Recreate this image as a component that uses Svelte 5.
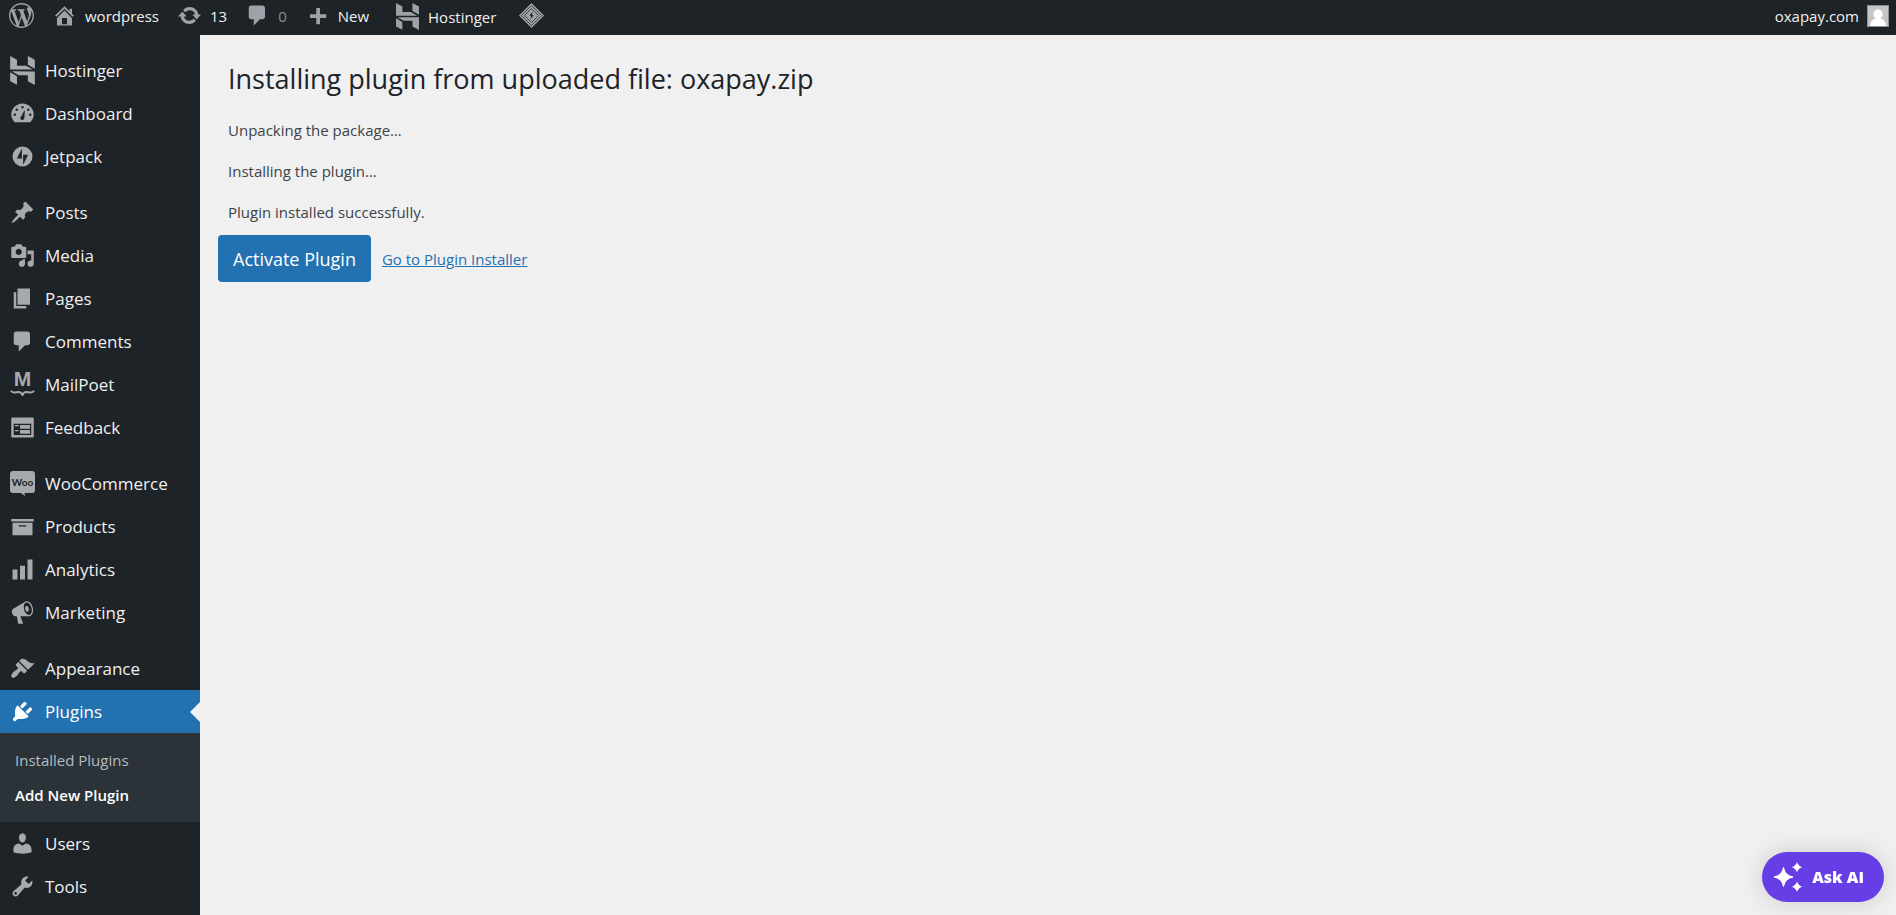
<script>
  const hostinger =
    'M16.415 0v7.16l5.785 3.384V3.006L16.415 0ZM1.8 0v11.237h18.815L14.89 8.09l-7.457-.003V3.024L1.8 0Zm14.615 20.894v-5.019l-7.514-.005c.007.033-5.82-3.197-5.82-3.197l19.119.091V24l-5.785-3.106ZM1.8 13.551v7.343l5.633 2.949v-6.988L1.8 13.551Z';

  const icons = {
    wordpress:
      'M20 10c0-5.51-4.49-10-10-10C4.48 0 0 4.49 0 10c0 5.52 4.48 10 10 10 5.51 0 10-4.48 10-10zM7.78 15.37L4.37 6.22c.55-.02 1.17-.08 1.17-.08.5-.06.44-1.13-.06-1.11 0 0-1.45.11-2.37.11-.18 0-.37 0-.58-.01C4.12 2.69 6.87 1.11 10 1.11c2.33 0 4.45.87 6.05 2.34-.68-.11-1.65.39-1.65 1.58 0 .74.45 1.36.9 2.1.35.61.55 1.36.55 2.46 0 1.49-1.4 5-1.4 5l-3.03-8.37c.54-.02.82-.17.82-.17.5-.05.44-1.25-.06-1.22 0 0-1.44.12-2.38.12-.87 0-2.33-.12-2.33-.12-.5-.03-.56 1.2-.06 1.22l.92.08 1.26 3.41zM17.41 10c.24-.64.74-1.87.43-4.25.7 1.29 1.05 2.71 1.05 4.25 0 3.29-1.73 6.24-4.4 7.78.97-2.59 1.94-5.2 2.92-7.78zM6.1 18.09C3.12 16.65 1.11 13.53 1.11 10c0-1.3.23-2.48.72-3.59C3.25 10.3 4.67 14.2 6.1 18.09zm4.03-6.63l2.58 6.98c-.86.29-1.76.45-2.71.45-.79 0-1.57-.11-2.29-.33.81-2.38 1.62-4.74 2.42-7.1z',
    home: 'M16 8.5l1.53 1.53-1.06 1.06L10 4.6l-6.47 6.49-1.06-1.06L10 2.5l4 4v-2h2v4zm-6-2.46l6 5.99V18H4v-5.97zM12 17v-5H8v5h4z',
    update:
      'M10.2 3.28c3.53 0 6.43 2.61 6.92 6h2.08l-3.5 4-3.5-4h2.32c-.45-1.97-2.21-3.45-4.32-3.45-1.45 0-2.73.71-3.54 1.78L4.95 5.66C6.23 4.2 8.11 3.28 10.2 3.28zm-.4 13.44c-3.52 0-6.43-2.61-6.92-6H.8l3.5-4c1.17 1.33 2.33 2.67 3.5 4H5.48c.45 1.97 2.21 3.45 4.32 3.45 1.45 0 2.73-.71 3.54-1.78l1.71 1.95c-1.28 1.46-3.15 2.38-5.25 2.38z',
    comments: 'M5 2h9c1.1 0 2 .9 2 2v7c0 1.1-.9 2-2 2h-2l-5 5v-5H5c-1.1 0-2-.9-2-2V4c0-1.1.9-2 2-2z',
    plus: 'M17 9v3h-5v5H9v-5H4V9h5V4h3v5z',
    dashboard:
      'M3.76 17h12.48c1.28-1.51 2.76-3.43 2.76-6 0-5-4-9-9-9S1 6 1 11c0 2.57 1.48 4.49 2.76 6zM9 5a1 1 0 1 1 2 0a1 1 0 1 1-2 0zM4.4 7a1 1 0 1 1 2 0a1 1 0 1 1-2 0zM13.6 7a1 1 0 1 1 2 0a1 1 0 1 1-2 0zM2.8 11a1 1 0 1 1 2 0a1 1 0 1 1-2 0zM15.2 11a1 1 0 1 1 2 0a1 1 0 1 1-2 0zM11.4 7.600l.5.2-.4 5.200c.2 1.300-.6 2.200-1.600 2.200-1.200 0-2-1.200-1.600-2.300.2-.5.5-.8.9-1z',
    jetpack: 'M10 2a8 8 0 1 0 0 16 8 8 0 0 0 0-16zM9.500 11.500h-4l4-8zM10.500 16.500v-8h4z',
    posts:
      'M10.44 3.02l1.82-1.82 6.36 6.35-1.83 1.82c-1.05-.68-2.48-.57-3.41.36l-.75.75c-.92.93-1.04 2.35-.35 3.41l-1.83 1.82-2.41-2.41-2.8 2.79c-.42.42-3.38 2.71-3.8 2.29s1.86-3.39 2.28-3.81l2.79-2.79L4.1 9.36l1.83-1.82c1.05.69 2.48.57 3.4-.36l.75-.75c.93-.92 1.05-2.35.36-3.41z',
    media:
      'M13 11V4c0-.55-.45-1-1-1h-1.67L9 1H5L3.67 3H2c-.55 0-1 .45-1 1v7c0 .55.45 1 1 1h10c.55 0 1-.45 1-1zM7 4.5c1.38 0 2.5 1.12 2.5 2.5S8.38 9.5 7 9.5 4.5 8.38 4.5 7 5.62 4.5 7 4.5zM14 6h5v10.5c0 1.38-1.12 2.5-2.5 2.5S14 17.88 14 16.5s1.12-2.5 2.5-2.5c.17 0 .34.02.5.05V9h-3V6zm-4 8.05V13h2v3.5c0 1.38-1.12 2.5-2.5 2.5S7 17.88 7 16.5 8.12 14 9.5 14c.17 0 .34.02.5.05z',
    pages: 'M6 15V2h10v13H6zm-1 1h8v2H3V5h2v11z',
    feedback:
      'M2 2h16c.55 0 1 .45 1 1v14c0 .55-.45 1-1 1H2c-.55 0-1-.45-1-1V3c0-.55.45-1 1-1zm15 14V7H3v9h14zM4 8v1h3V8H4zm4 0v3h8V8H8zm-4 4v1h3v-1H4zm4 0v3h8v-3H8z',
    products: 'M19 4v2H1V4h18zM2 7h16v10H2V7zm11 3V9H7v1h6z',
    analytics: 'M18 18V2h-4v16h4zm-6 0V7H8v11h4zm-6 0v-8H2v8h4z',
    marketing:
      'M18.15 5.94c.46 1.62.38 3.22-.02 4.48-.42 1.28-1.26 2.18-2.3 2.48-.16.06-.26.06-.4.06-.06.02-.12.02-.18.02-.06.02-.14.02-.22.02h-6.8l2.22 5.5c.02.14-.06.26-.14.34-.08.1-.24.16-.34.16H6.95c-.1 0-.26-.06-.34-.16-.08-.08-.16-.2-.14-.34l-1-5.5H4.25l-.02-.02c-.5.06-1.08-.18-1.54-.62s-.88-1.08-1.06-1.88c-.24-.8-.2-1.56-.02-2.2.18-.62.58-1.08 1.06-1.3l.02-.02 9-5.4c.1-.06.18-.1.24-.16.06-.04.14-.08.24-.12.16-.08.28-.12.5-.18 1.04-.3 2.24.1 3.22.98s1.84 2.24 2.26 3.86zm-2.58 5.98h-.02c.4-.1.74-.34 1.04-.7.58-.7.86-1.76.86-3.04 0-.64-.1-1.3-.28-1.98-.34-1.36-1.02-2.5-1.78-3.24s-1.68-1.1-2.46-.88c-.82.22-1.4.96-1.7 2-.32 1.04-.28 2.36.06 3.72.38 1.36 1 2.5 1.8 3.24.78.74 1.62 1.1 2.48.88zm-2.54-7.08c.22-.04.42-.02.62.04.38.16.76.48 1.02 1s.42 1.2.42 1.78c0 .3-.04.56-.12.8-.18.48-.44.84-.86.94-.34.1-.8-.06-1.14-.4s-.64-.86-.78-1.5c-.18-.62-.12-1.24.02-1.72s.48-.84.82-.94z',
    appearance:
      'M14.48 11.06L7.41 3.99l1.5-1.5c.5-.56 2.3-.47 3.51.32 1.21.8 1.43 1.28 2.91 2.1 1.18.64 2.45 1.26 4.45.85zm-.71.71L6.7 4.7 4.93 6.47c-.39.39-.39 1.02 0 1.41l1.06 1.06c.39.39.39 1.03 0 1.42-.6.6-1.43 1.11-2.21 1.69-.35.26-.7.53-1.01.84C1.43 14.23.4 16.08 1.4 17.07c.99 1 2.84-.03 4.18-1.36.31-.31.58-.66.85-1.02.57-.78 1.08-1.61 1.69-2.21.39-.39 1.02-.39 1.41 0l1.06 1.06c.39.39 1.02.39 1.41 0z',
    plugins:
      'M13.11 4.36L9.87 7.6 8 5.73l3.24-3.24c.35-.34 1.05-.2 1.56.32.52.51.66 1.21.31 1.55zm-8 1.77l.91-1.12 9.01 9.01-1.19.84c-.71.71-2.63 1.16-3.82 1.16H6.14L4.9 17.26c-.59.59-1.54.59-2.12 0-.59-.58-.59-1.53 0-2.12l1.24-1.24v-3.88c0-1.13.4-3.19 1.09-3.89zm7.26 3.97l3.24-3.24c.34-.35 1.04-.21 1.55.31.52.51.66 1.21.31 1.55l-3.24 3.25z',
    users:
      'M10 9.25c-2.27 0-2.73-3.44-2.73-3.44C7 4.02 7.82 2 9.97 2c2.16 0 2.98 2.02 2.71 3.81 0 0-.41 3.44-2.68 3.44zm0 2.57L12.72 10c2.39 0 4.52 2.33 4.52 4.53v2.49s-3.65 1.13-7.24 1.13c-3.65 0-7.24-1.13-7.24-1.13v-2.49c0-2.25 1.94-4.48 4.47-4.48z',
    tools:
      'M16.68 9.77c-1.34 1.34-3.3 1.67-4.95.99l-5.41 6.52c-.99.99-2.59.99-3.58 0s-.99-2.59 0-3.57l6.52-5.42c-.68-1.65-.35-3.61.99-4.95 1.28-1.28 3.12-1.62 4.72-1.06l-2.89 2.89 2.82 2.82 2.86-2.87c.53 1.58.18 3.39-1.08 4.65zM3.81 16.21c.4.39 1.04.39 1.43 0 .4-.4.4-1.04 0-1.43-.39-.4-1.03-.4-1.43 0-.39.39-.39 1.03 0 1.43z'
  };

  const groups = [
    [
      { label: 'Hostinger', icon: 'hostinger' },
      { label: 'Dashboard', icon: 'dashboard' },
      { label: 'Jetpack', icon: 'jetpack' }
    ],
    [
      { label: 'Posts', icon: 'posts' },
      { label: 'Media', icon: 'media' },
      { label: 'Pages', icon: 'pages' },
      { label: 'Comments', icon: 'comments' },
      { label: 'MailPoet', icon: 'mailpoet' },
      { label: 'Feedback', icon: 'feedback' }
    ],
    [
      { label: 'WooCommerce', icon: 'woo' },
      { label: 'Products', icon: 'products' },
      { label: 'Analytics', icon: 'analytics' },
      { label: 'Marketing', icon: 'marketing' }
    ],
    [
      { label: 'Appearance', icon: 'appearance' },
      {
        label: 'Plugins',
        icon: 'plugins',
        current: true,
        children: [{ label: 'Installed Plugins' }, { label: 'Add New Plugin', current: true }]
      },
      { label: 'Users', icon: 'users' },
      { label: 'Tools', icon: 'tools' }
    ]
  ];

  const messages = ['Unpacking the package…', 'Installing the plugin…', 'Plugin installed successfully.'];
</script>

{#snippet icon(name)}
  {#if name === 'hostinger'}
    <svg class="icon tall" viewBox="1.8 0 20.4 24" aria-hidden="true"><path d={hostinger} /></svg>
  {:else if name === 'mailpoet'}
    <svg class="icon mail" viewBox="0 0 25 35" aria-hidden="true">
      <text x="12.500" y="19" text-anchor="middle" font-size="21" font-weight="700">M</text>
      <path class="line" d="M1.500 24.300c2 2.200 4.800.8 7 .8 2 0 3 .9 4 2.900 1-2 2-2.900 4-2.900 2.200 0 5 1.400 7-.8" />
    </svg>
  {:else if name === 'woo'}
    <svg class="icon" viewBox="0 0 25 25" aria-hidden="true">
      <path d="M3 0h19a3 3 0 0 1 3 3v16a3 3 0 0 1-3 3h-7.500l.5 3-4-3H3a3 3 0 0 1-3-3V3a3 3 0 0 1 3-3z" />
      <text class="cut woo" x="12.500" y="14.500" text-anchor="middle" font-size="10" font-weight="700">Woo</text>
    </svg>
  {:else}
    <svg class="icon" viewBox="0 0 20 20" aria-hidden="true"><path fill-rule="evenodd" d={icons[name]} /></svg>
  {/if}
{/snippet}

<div class="page">
  <header class="bar">
    <nav class="bar-items" aria-label="Toolbar">
      <a class="bar-item" href="#about" aria-label="About WordPress">{@render icon('wordpress')}</a>
      <a class="bar-item" href="#site">{@render icon('home')}<span>wordpress</span></a>
      <a class="bar-item" href="#updates">{@render icon('update')}<span>13</span></a>
      <a class="bar-item" href="#comments">{@render icon('comments')}<span class="dim">0</span></a>
      <a class="bar-item" href="#new">{@render icon('plus')}<span>New</span></a>
      <a class="bar-item host" href="#hostinger">{@render icon('hostinger')}<span>Hostinger</span></a>
      <a class="bar-item cache" href="#cache" aria-label="LiteSpeed Cache">
        <svg class="icon" viewBox="0 0 25 25" aria-hidden="true">
          <path d="M12.500 0L25 12.500 12.500 25 0 12.500z" />
          <path class="ring" d="M12.500 2.500l10 10-10 10-10-10z" />
          <path class="ring" d="M12.500 5.500l7 7-7 7-7-7z" />
          <path class="cut" d="M14 8.500l-3.500 3.700 1.700.9-1.200 3.400 3.600-4-1.700-.9z" />
        </svg>
      </a>
    </nav>
    <a class="bar-item account" href="#profile">
      <span>oxapay.com</span>
      <svg class="avatar" viewBox="0 0 22 22" aria-hidden="true">
        <rect width="22" height="22" fill="#8c8f94" />
        <rect x="1" y="1" width="20" height="20" fill="#c5c5c5" />
        <path
          fill="#fff"
          d="M11 4.500c2.700 0 4.600 1.900 4.600 4.500 0 1.900-.9 3.500-2.300 4.300 3.300.7 5.200 3.300 5.700 7.700H3c.5-4.400 2.400-7 5.700-7.700C7.300 12.500 6.400 10.900 6.400 9c0-2.600 1.900-4.500 4.600-4.500z"
        />
      </svg>
    </a>
  </header>

  <div class="body">
    <nav class="menu" aria-label="Main menu">
      {#each groups as group}
        <ul class="group">
          {#each group as item}
            <li>
              <a class="item" class:current={item.current} href="#{item.icon}">
                {@render icon(item.icon)}<span>{item.label}</span>
              </a>
              {#if item.children}
                <ul class="sub">
                  {#each item.children as child}
                    <li><a class="sub-item" class:active={child.current} href="#plugins">{child.label}</a></li>
                  {/each}
                </ul>
              {/if}
            </li>
          {/each}
        </ul>
      {/each}
    </nav>

    <main class="content">
      <h1>Installing plugin from uploaded file: oxapay.zip</h1>
      {#each messages as message}
        <p>{message}</p>
      {/each}
      <div class="actions">
        <button type="button" class="primary">Activate Plugin</button>
        <a class="link" href="#installer">Go to Plugin Installer</a>
      </div>
    </main>
  </div>

  <button type="button" class="ask">
    <svg width="30" height="30" viewBox="0 0 30 30" aria-hidden="true">
      <path d="M10.500 5.500q1.500 8 9.500 9.500-8 1.500-9.500 9.500Q9 16.500 1 15q8-1.500 9.500-9.500z" stroke="#fff" stroke-width="1" stroke-linejoin="round" />
      <path d="M24 0q1.200 4 5.200 5.200-4 1.200-5.200 5.200-1.200-4-5.200-5.200Q22.800 4 24 0z" />
      <path d="M24 19.600q1.200 4 5.200 5.200-4 1.200-5.200 5.200-1.200-4-5.200-5.200 4-1.200 5.200-5.200z" />
    </svg>
    <span>Ask AI</span>
  </button>
</div>

<style>
  :global(body) {
    background: #f0f0f1;
  }

  .page {
    display: flex;
    flex-direction: column;
    min-height: 100vh;
    font-family: 'Open Sans', 'Noto Sans', sans-serif;
    font-size: 15px;
    color: #3c434a;
  }

  a {
    color: inherit;
    text-decoration: none;
  }

  ul {
    list-style: none;
    margin: 0;
    padding: 0;
  }

  .icon {
    width: 25px;
    height: 25px;
    flex: none;
    fill: #a7aaad;
  }

  .icon.tall {
    height: 29px;
  }

  .icon.mail {
    height: 35px;
    font-family: 'Liberation Sans', Arial, sans-serif;
  }

  .icon .line {
    fill: none;
    stroke: #a7aaad;
    stroke-width: 2;
    stroke-linecap: round;
    stroke-linejoin: round;
  }

  .icon .cut {
    fill: #1d2327;
  }

  .icon .woo {
    font-family: Lato, sans-serif;
  }

  .icon .ring {
    fill: none;
    stroke: #1d2327;
    stroke-width: 0.7;
  }

  .bar {
    display: flex;
    justify-content: space-between;
    height: 35px;
    background: #1d2327;
    color: #f0f0f1;
  }

  .bar-items {
    display: flex;
    padding-left: 9px;
    gap: 18px;
  }

  .bar-item {
    display: flex;
    align-items: center;
    gap: 8px;
    height: 31px;
    line-height: 22px;
  }

  .bar-item .icon {
    fill: #9ca2a7;
  }

  .bar-item .icon.tall {
    height: 27px;
  }

  .host {
    height: 33px;
    margin-left: 8px;
  }

  .cache {
    margin-left: 5px;
  }

  .account {
    padding-right: 7px;
  }

  .dim {
    color: #8c8f94;
  }

  .avatar {
    width: 22px;
    height: 22px;
  }

  .body {
    display: flex;
    flex: 1;
  }

  .menu {
    flex: none;
    width: 200px;
    padding-top: 14px;
    background: #1d2327;
    color: #f0f0f1;
  }

  .group + .group {
    margin-top: 13px;
  }

  .item {
    position: relative;
    display: flex;
    align-items: center;
    gap: 10px;
    height: 43px;
    padding-left: 10px;
    font-size: 17px;
  }

  .item.current {
    background: #2271b1;
    color: #fff;
  }

  .item.current .icon {
    fill: #fff;
  }

  .item.current::after {
    content: '';
    position: absolute;
    right: 0;
    top: 12px;
    border: 10px solid transparent;
    border-left: 0;
    border-right-color: #f0f0f1;
  }

  .sub {
    padding: 10px 0 9px;
    background: #2c3338;
  }

  .sub-item {
    display: block;
    padding-left: 15px;
    line-height: 35px;
    color: #b5bcc2;
  }

  .sub-item.active {
    color: #fff;
    font-weight: 600;
  }

  .content {
    flex: 1;
    padding: 24px 28px;
  }

  h1 {
    margin: 0 0 19px;
    font-size: 27px;
    font-weight: 400;
    line-height: 40px;
    color: #1d2327;
  }

  p {
    margin: 0 0 17px;
    line-height: 24px;
  }

  .actions {
    display: flex;
    align-items: center;
    gap: 11px;
    margin: -6px 0 0 -10px;
  }

  .primary {
    height: 47px;
    padding: 0 15px;
    border: 0;
    border-radius: 4px;
    background: #2271b1;
    color: #fff;
    font: 500 18px 'Open Sans', 'Noto Sans', sans-serif;
  }

  .link {
    color: #2271b1;
    text-decoration: underline;
  }

  .ask {
    position: fixed;
    right: 12px;
    bottom: 13px;
    display: flex;
    align-items: center;
    gap: 9px;
    height: 50px;
    padding: 0 20px 0 11px;
    border: 0;
    border-radius: 25px;
    background: #673de6;
    box-shadow: 0 0 24px rgba(0, 0, 0, 0.15);
    color: #fff;
    font: 800 16px 'Open Sans', 'Noto Sans', sans-serif;
  }

  .ask svg {
    fill: #fff;
  }
</style>
